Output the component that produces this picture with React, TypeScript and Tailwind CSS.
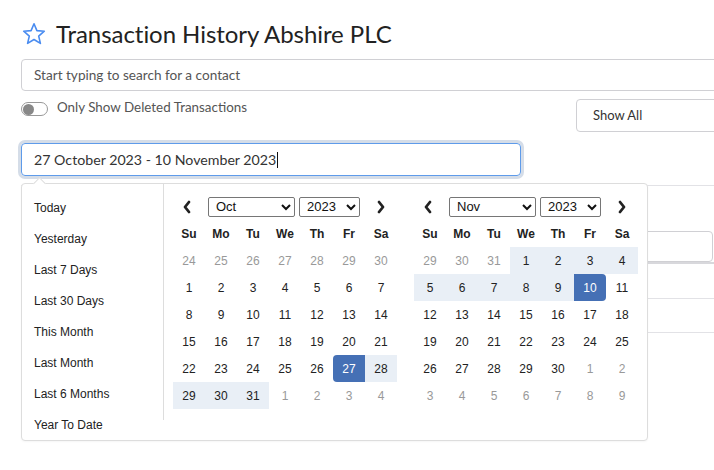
import { useState } from 'react'

const RANGES = ['Today', 'Yesterday', 'Last 7 Days', 'Last 30 Days', 'This Month', 'Last Month', 'Last 6 Months', 'Year To Date']
const DAYS = ['Su', 'Mo', 'Tu', 'We', 'Th', 'Fr', 'Sa']
const MONTHS = ['Jan', 'Feb', 'Mar', 'Apr', 'May', 'Jun', 'Jul', 'Aug', 'Sep', 'Oct', 'Nov', 'Dec']

type Cell = { d: number; m: number; off: boolean }

// 6 semaines ; si le mois commence un dimanche on affiche quand même la semaine d'avant
function buildMonth(year: number, month: number): Cell[][] {
  const first = new Date(year, month, 1)
  const back = first.getDay() === 0 ? 7 : first.getDay()
  const start = new Date(year, month, 1 - back)
  const rows: Cell[][] = []
  for (let r = 0; r < 6; r++) {
    const row: Cell[] = []
    for (let c = 0; c < 7; c++) {
      const dt = new Date(start.getFullYear(), start.getMonth(), start.getDate() + r * 7 + c)
      row.push({ d: dt.getDate(), m: dt.getMonth(), off: dt.getMonth() !== month })
    }
    rows.push(row)
  }
  return rows
}

const START = { m: 9, d: 27 }
const END = { m: 10, d: 10 }

const key = (m: number, d: number) => m * 100 + d

function Chevron({ dir }: { dir: 'left' | 'right' }) {
  return (
    <svg width="10" height="14" viewBox="0 0 10 14" fill="none" stroke="#222" strokeWidth={2.8} strokeLinecap="round" strokeLinejoin="round">
      {dir === 'left' ? <polyline points="7,2 3,7 7,12" /> : <polyline points="3,2 7,7 3,12" />}
    </svg>
  )
}

function Calendar({ year, month }: { year: number; month: number }) {
  const rows = buildMonth(year, month)
  const s = key(START.m, START.d)
  const e = key(END.m, END.d)
  return (
    <div className="w-[224px]">
      {/* navigation */}
      <div className="flex items-center h-[27px]">
        <button className="w-[28px] h-[27px] flex items-center justify-center">
          <Chevron dir="left" />
        </button>
        <select
          defaultValue={MONTHS[month]}
          className="ml-[7px] w-[87px] h-[20px] border border-[#767676] rounded-[2px] bg-white text-[13px] pl-[3px] text-[#111]"
        >
          {MONTHS.map(m => <option key={m}>{m}</option>)}
        </select>
        <select
          defaultValue={String(year)}
          className="ml-[4px] w-[61px] h-[20px] border border-[#767676] rounded-[2px] bg-white text-[13px] pl-[3px] text-[#111]"
        >
          {[2021, 2022, 2023, 2024, 2025].map(y => <option key={y}>{y}</option>)}
        </select>
        <button className="ml-auto w-[32px] h-[27px] flex items-center justify-center">
          <Chevron dir="right" />
        </button>
      </div>

      <div className="grid grid-cols-7">
        {DAYS.map(d => (
          <div key={d} className="h-[27px] flex items-center justify-center text-[12px] font-bold text-[#222]">{d}</div>
        ))}
        {rows.flat().map((c, i) => {
          const k = key(c.m, c.d)
          const isStart = !c.off && k === s
          const isEnd = !c.off && k === e
          const inRange = !c.off && k > s && k < e
          let cls = 'text-[#222]'
          if (c.off) cls = 'text-[#999]'
          if (inRange) cls = 'bg-[#e9eff6] text-[#222]'
          if (isStart) cls = 'bg-[#4570b5] text-white rounded-l-[4px]'
          if (isEnd) cls = 'bg-[#4570b5] text-white rounded-r-[4px]'
          return (
            <div key={i} className={`h-[27px] flex items-center justify-center text-[12px] ${cls}`}>{c.d}</div>
          )
        })}
      </div>
    </div>
  )
}

export default function App() {
  const [deleted, setDeleted] = useState(false)

  return (
    <div className="w-[714px] h-[470px] overflow-hidden bg-white" style={{ fontFamily: 'Lato, "Noto Sans", sans-serif' }}>
      <div className="w-[780px] pl-[21px] pt-[19px]">
        {/* Titre */}
        <div className="flex items-center h-[30px] gap-[10px]">
          <svg width="24" height="24" viewBox="0 0 24 24" fill="none" stroke="#4a8cf0" strokeWidth={1.6} strokeLinejoin="round" className="ml-[1px]">
            <polygon points="12,1.8 14.9,8.6 22.3,9.2 16.7,14.1 18.4,21.4 12,17.5 5.6,21.4 7.3,14.1 1.7,9.2 9.1,8.6" />
          </svg>
          <h1 className="text-[24px] text-[#222] leading-none tracking-[-0.05px]">Transaction History Abshire PLC</h1>
        </div>

        {/* Recherche contact */}
        <input
          placeholder="Start typing to search for a contact"
          className="mt-[10px] w-[740px] h-[32px] border border-[#d0d0d4] rounded-[4px] px-[12px] text-[13.6px] placeholder:text-[#555]"
        />

        <div className="flex mt-[8px]">
          <div className="w-[555px] flex items-start pt-[3px]">
            <button
              onClick={() => setDeleted(!deleted)}
              className="w-[27px] h-[14px] rounded-full border border-[#999] flex items-center px-[1px]"
              aria-label="toggle"
            >
              <span className="w-[11px] h-[11px] rounded-full bg-[#888]" />
            </button>
            <span className="ml-[9px] text-[13.4px] text-[#555] leading-[11px]">Only Show Deleted Transactions</span>
          </div>
          <div className="w-[170px] h-[33px] border border-[#d0d0d4] rounded-[4px] flex items-center pl-[16px] text-[13px] text-[#333]">
            Show All
          </div>
        </div>

        {/* Dates */}
        <div className="relative mt-[11px] w-[500px]">
          <div className="h-[33px] border border-[#5e9bea] rounded-[4px] shadow-[0_0_0_3px_#d5dde8] flex items-center pl-[12px] text-[14.2px] text-[#333]">
            27 October 2023 - 10 November 2023<span className="w-[1px] h-[16px] bg-[#111] ml-[1px]" />
          </div>

          {/* Popup sélection de période */}
          <div
            className="absolute left-0 top-[40px] z-10 w-[627px] bg-white border border-[#ddd] rounded-[4px] shadow-[0_1px_2px_rgba(0,0,0,0.04)] flex items-start"
            style={{ fontFamily: '"Liberation Sans", Arial, sans-serif' }}
          >
            <span className="absolute left-[13px] top-[-5px] w-[9px] h-[9px] rotate-45 bg-white border-l border-t border-[#ddd]" />
            <ul className="w-[141px] pt-[8px]">
              {RANGES.map(r => (
                <li key={r} className="h-[31px] flex items-center pl-[12px] text-[12px] text-[#222]">{r}</li>
              ))}
            </ul>
            <div className="border-l border-[#ddd] pl-[9px] pr-[8px] pt-[9px] pb-[11px] flex gap-[17px]">
              <Calendar year={2023} month={9} />
              <Calendar year={2023} month={10} />
            </div>
          </div>
        </div>

        {/* Contenu sous le popup */}
        <div className="mt-[9px] border-t border-[#e2e2e6]">
          <div className="pt-[45px]">
            <div className="w-[692px] h-[31px] border border-[#d0d0d4] rounded-[4px]" />
          </div>
          <div className="border-b-2 border-[#d8d8dc]" />
          <div className="h-[35px] border-b border-[#e2e2e6]" />
          <div className="h-[34px] border-b border-[#e2e2e6]" />
        </div>
      </div>
    </div>
  )
}
